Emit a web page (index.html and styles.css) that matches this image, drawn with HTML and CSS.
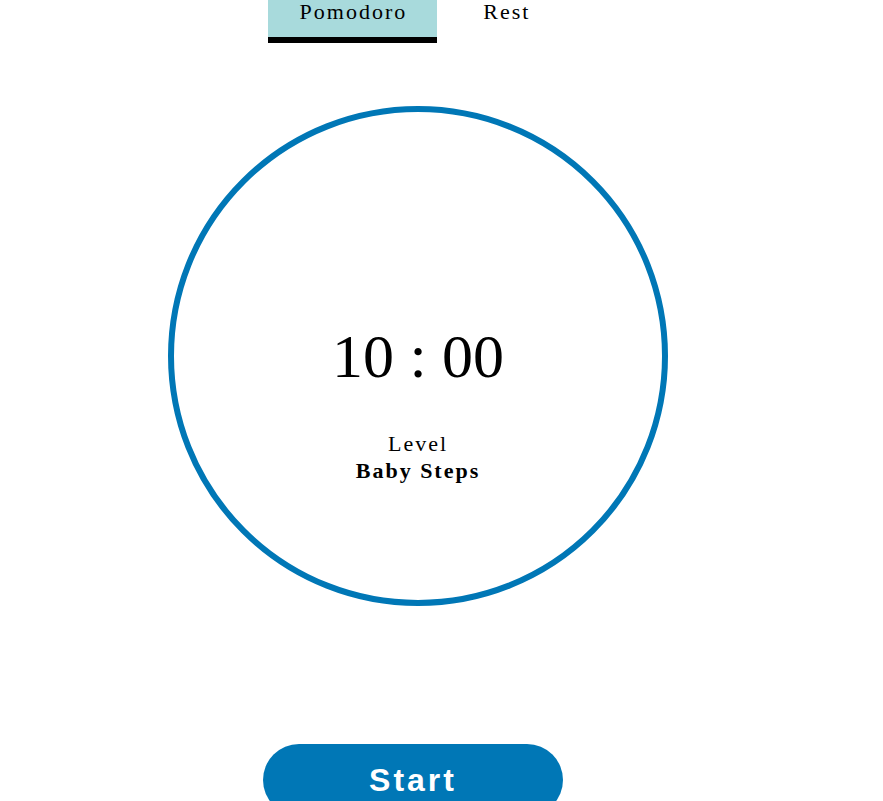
FILE: index.html
```html
<!DOCTYPE html>
<html lang="en">
<head>
<meta charset="utf-8">
<title>Pomodoro</title>
<link rel="stylesheet" href="styles.css">
</head>
<body>
<main class="app">
  <nav class="tabs">
    <div class="tab tab-active">Pomodoro</div>
    <div class="tab">Rest</div>
  </nav>
  <section class="dial">
    <div class="time">10 : 00</div>
    <div class="level-label">Level</div>
    <div class="level-name">Baby Steps</div>
  </section>
  <button class="start" type="button">Start</button>
</main>
</body>
</html>
```
FILE: styles.css
```css
html, body {
  margin: 0;
  padding: 0;
  background: #ffffff;
  overflow: hidden;
}

body {
  font-family: "Liberation Serif", "Times New Roman", serif;
  color: #000000;
}

.app {
  width: 832px;
  display: flex;
  flex-direction: column;
  align-items: center;
}

.tabs {
  display: flex;
  gap: 14px;
  margin-right: 4px;
}

.tab {
  font-size: 22px;
  line-height: 24px;
  letter-spacing: 2px;
  padding: 0 30px 13px 32px;
  border-bottom: 6px solid transparent;
}

.tab-active {
  background: #a8dadc;
  border-bottom-color: #000000;
}

.dial {
  box-sizing: border-box;
  width: 500px;
  height: 500px;
  margin-top: 63px;
  margin-left: 4px;
  border: 6px solid #0077b6;
  border-radius: 50%;
  display: flex;
  flex-direction: column;
  align-items: center;
  padding-top: 212px;
}

.time {
  font-size: 62px;
  line-height: 64px;
  margin-bottom: 42px;
}

.level-label,
.level-name {
  font-size: 22px;
  line-height: 27px;
  letter-spacing: 2px;
}

.level-name {
  font-weight: bold;
}

.start {
  margin-top: 138px;
  margin-right: 6px;
  width: 300px;
  height: 72px;
  border: none;
  border-radius: 36px;
  background: #0077b6;
  color: #ffffff;
  font-family: "Liberation Sans", Arial, sans-serif;
  font-weight: bold;
  font-size: 32px;
  line-height: 72px;
  letter-spacing: 3px;
  padding: 0;
}
```
